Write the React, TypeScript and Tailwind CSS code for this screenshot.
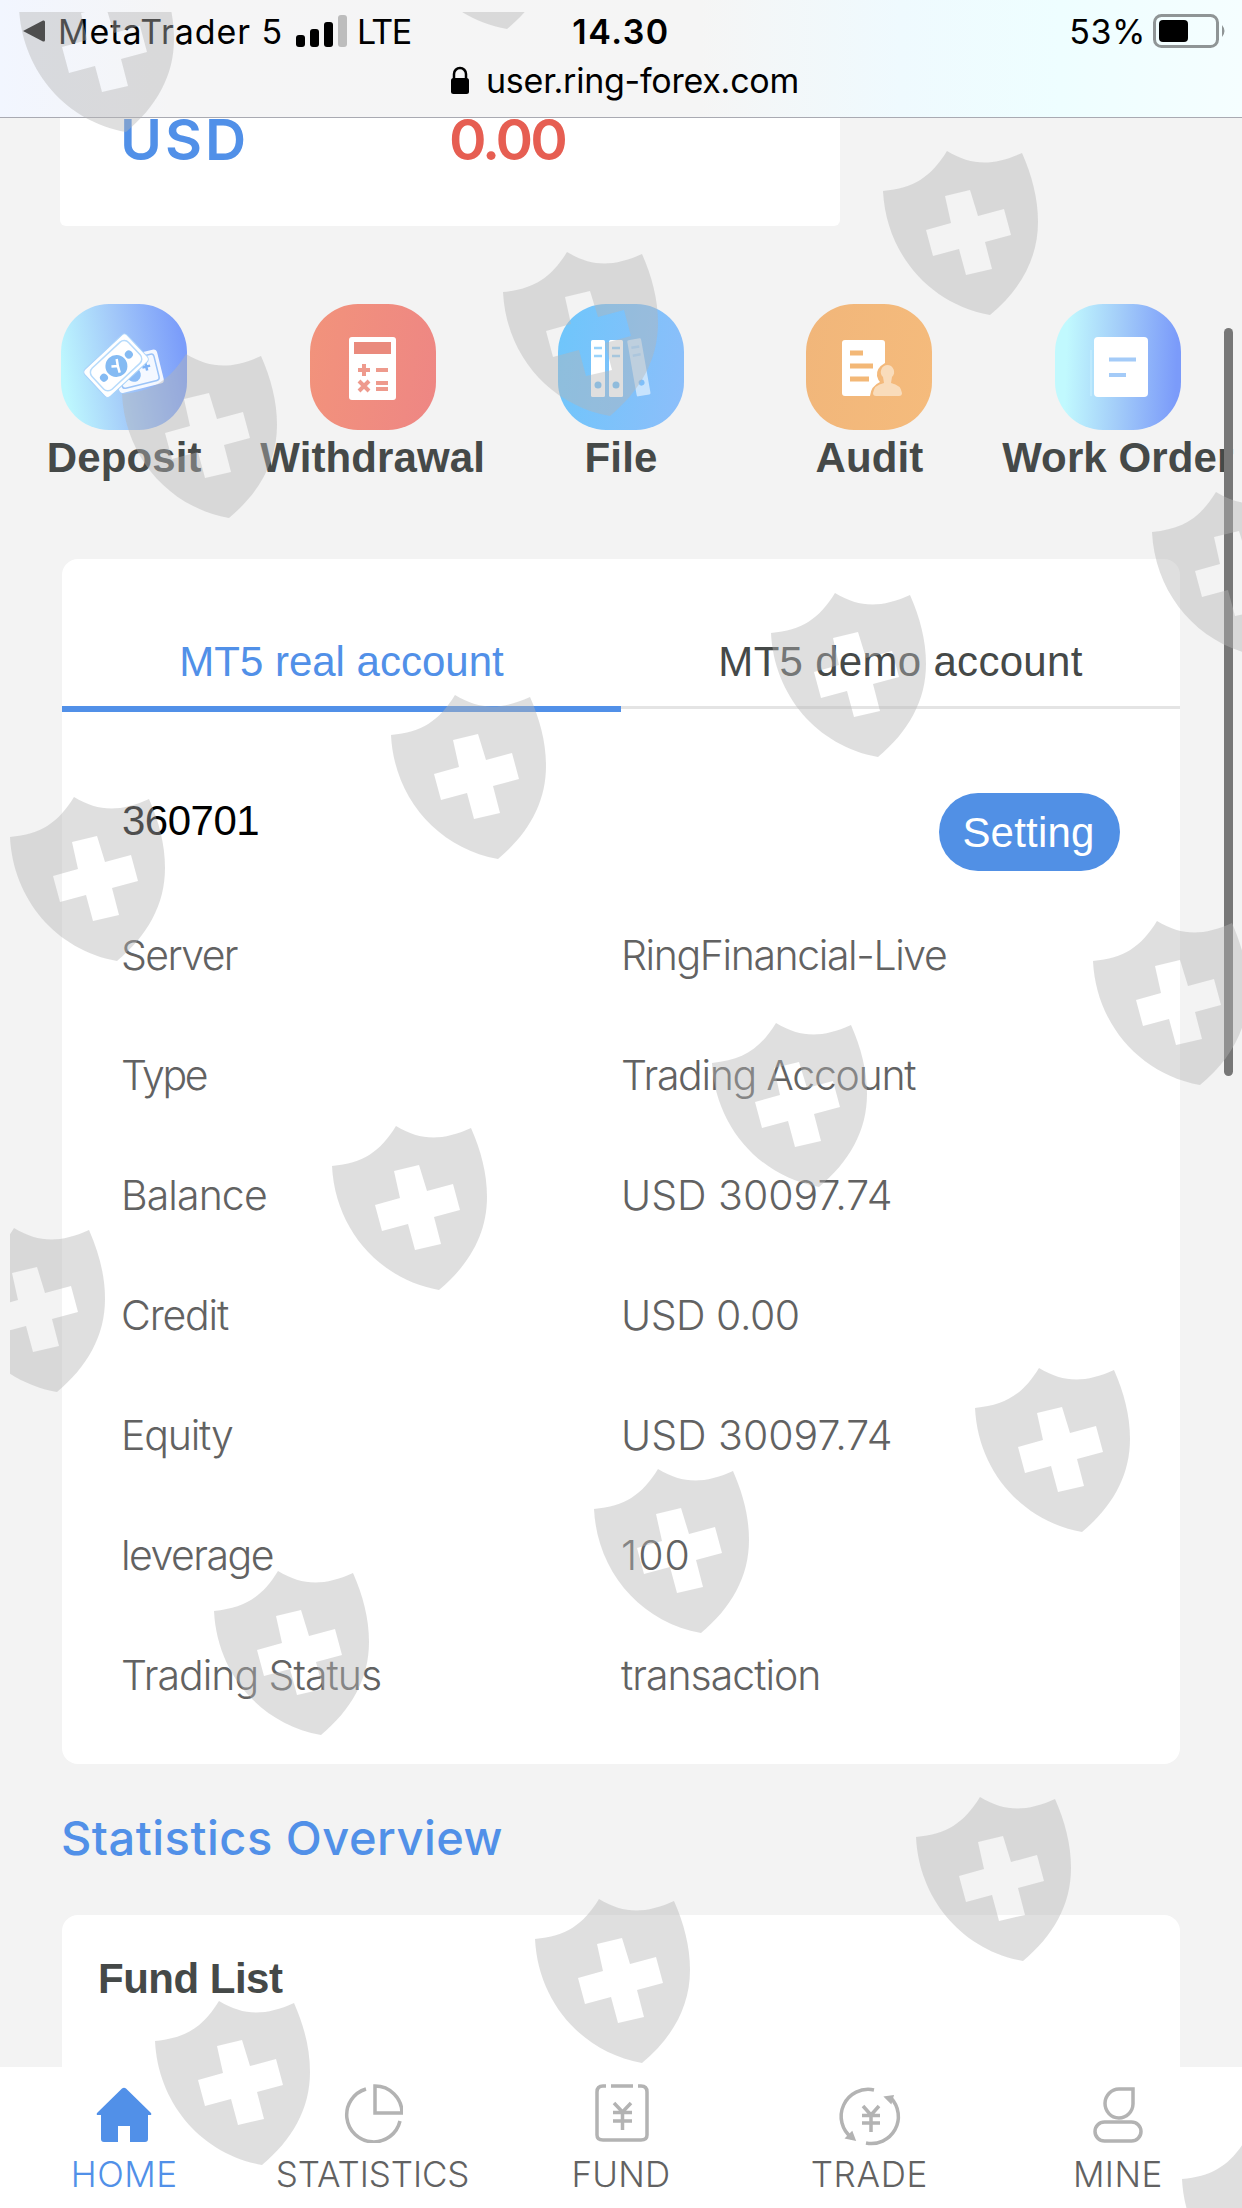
import React from 'react';

const shields = [
  [19, -31], [400, -134], [883, 152], [503, 253], [122, 355], [1152, 493],
  [771, 594], [391, 696], [10, 798], [1093, 922], [712, 1024], [332, 1127],
  [-50, 1229], [975, 1369], [594, 1470], [214, 1572], [916, 1798],
  [535, 1900], [155, 2002], [1182, 2140],
];

const Watermark: React.FC = () => (
  <div className="absolute left-[10px] top-[12px] w-[1232px] h-[2196px] overflow-hidden pointer-events-none">
    <svg width="1232" height="2196" viewBox="10 12 1232 2196">
      {shields.map(([x, y]) => (
        <path
          key={`${x}-${y}`}
          transform={`translate(${x} ${y})`}
          fill="#b4b4b4"
          fillOpacity="0.43"
          fillRule="evenodd"
          d="M0 39C31 36 48 25 64 -1C89 14 110 14 139 1C149 24 155 46 155 70C155 107 137 138 107 163C46 152 3 101 0 39ZM62 44L87 38L95 64L121 57L128 83L102 90L109 117L83 123L76 97L50 104L43 78L68 71Z"
        />
      ))}
    </svg>
  </div>
);

const StatusBar: React.FC = () => (
  <header className="h-[118px] border-b border-[#a9aab2] bg-[linear-gradient(90deg,#f2f6ff_0px,#f5f5f6_170px,#f5f5f5_700px,#effafe_900px,#eefeff_1060px,#f5feff_1242px)] text-black">
    <div className="grid grid-cols-3 items-center h-[62px] pl-[22px] pr-[15px] text-[34px]">
      <div className="flex items-center">
        <svg width="24" height="24" viewBox="0 0 24 24">
          <path d="M1 12L21 1.500Q23 1 23 3V21Q23 23 21 22.500Z" />
        </svg>
        <span className="ml-[12px] tracking-[0.9px] whitespace-nowrap">MetaTrader 5</span>
        <svg className="ml-[13px]" width="51" height="32" viewBox="0 0 51 32">
          <rect x="0" y="20" width="9" height="12" rx="3" />
          <rect x="14" y="14" width="9" height="18" rx="3" />
          <rect x="28" y="7" width="9" height="25" rx="3" />
          <rect x="42" y="0" width="9" height="32" rx="3" fill="#bdbdbd" />
        </svg>
        <span className="ml-[10px] tracking-[-1.600px]">LTE</span>
      </div>
      <span className="text-center font-semibold tracking-[1.5px] pr-[7px]">14.30</span>
      <div className="flex items-center justify-end">
        <span className="tracking-[0.6px]">53%</span>
        <svg className="ml-[7px]" width="74" height="34" viewBox="0 0 74 34">
          <rect x="1.500" y="1.500" width="63" height="31" rx="7" fill="none" stroke="#8f9596" strokeWidth="3" />
          <rect x="6" y="6" width="29" height="22" rx="4" />
          <path d="M69 11Q74 17 69 23Z" fill="#8f9596" />
        </svg>
      </div>
    </div>
    <div className="flex items-center justify-center h-[36px] text-[34px] gap-[16px] pl-[7px]">
      <svg width="20" height="28" viewBox="0 0 20 28">
        <path d="M4 13V8a6 6 0 0 1 12 0V13" fill="none" stroke="black" strokeWidth="2.500" />
        <rect x="1" y="12" width="18" height="16" rx="2.500" />
      </svg>
      <span className="tracking-[-0.25px]">user.ring-forex.com</span>
    </div>
  </header>
);

const MoneyIcon = () => (
  <svg width="126" height="126" viewBox="0 0 126 126">
    <g transform="rotate(-14 84 66)">
      <rect x="54" y="48" width="46" height="35" rx="4" fill="#fff" fillOpacity="0.9" />
      <rect x="58" y="52" width="38" height="27" rx="3" fill="none" stroke="#9cc4f8" strokeWidth="1.500" />
      <path d="M86 59v8M82 63h8" stroke="#7fb3f5" strokeWidth="2.500" />
      <circle cx="72" cy="68" r="7" fill="#8bbcf6" />
    </g>
    <g transform="rotate(-43 54 62)">
      <rect x="26" y="44" width="58" height="37" rx="4" fill="#fff" stroke="#a9d3fa" strokeWidth="1" />
      <rect x="30" y="48" width="50" height="29" rx="6" fill="none" stroke="#b7dbfb" strokeWidth="1.500" />
      <circle cx="55" cy="63" r="11" fill="#85bbf3" />
      <circle cx="38" cy="63" r="4" fill="#85bbf3" />
      <circle cx="72" cy="63" r="4" fill="#85bbf3" />
      <path d="M51 60l5 4l4-6M56 64l-3 6" stroke="#fff" strokeWidth="2.500" fill="none" />
    </g>
  </svg>
);

const CalculatorIcon = () => (
  <svg width="126" height="126" viewBox="0 0 126 126">
    <rect x="39" y="33" width="47" height="63" rx="3" fill="#fff" />
    <rect x="44" y="38" width="37" height="12" fill="#ea8a7d" />
    <g stroke="#ee9a8d" strokeWidth="4">
      <path d="M48 66h12M54 60v12M66 66h12M49 77l10 10M59 77l-10 10M66 79h12M66 85h12" />
    </g>
  </svg>
);

const BindersIcon = () => (
  <svg width="126" height="126" viewBox="0 0 126 126">
    <rect x="33" y="36" width="14" height="57" rx="1.500" fill="#fff" />
    <rect x="51" y="36" width="14" height="57" rx="1.500" fill="#fff" />
    <g transform="rotate(-10 80 64)">
      <rect x="74" y="35" width="14" height="57" rx="1.500" fill="#fff" fillOpacity="0.55" />
      <path d="M77 43h8M77 51h8" stroke="#a5d3fc" strokeWidth="2.500" />
      <circle cx="81" cy="79" r="3" fill="#7fbff9" />
    </g>
    <path d="M36 44h8M36 52h8M54 44h8M54 52h8" stroke="#9bd4fb" strokeWidth="2.500" />
    <circle cx="40" cy="81" r="3.500" fill="#74c2fa" />
    <circle cx="58" cy="81" r="3.500" fill="#74c2fa" />
  </svg>
);

const AuditIcon = () => (
  <svg width="126" height="126" viewBox="0 0 126 126">
    <path
      fill="#fff"
      d="M39 36h37q3 0 3 3v20q-9 5-8 13q1 4 3 6q-9 4-10 14H39q-3 0-3-3V39q0-3 3-3Z"
    />
    <path d="M44 49h13M44 62h23M44 75h19" stroke="#f3b877" strokeWidth="5" />
    <path
      fill="#f9dcbb"
      d="M81 61a7 7 0 0 1 5 12l-1 6q10 2 11 10q0 3-3 3H70q-3 0-3-3q1-8 11-10l-1-6A7 7 0 0 1 81 61Z"
    />
  </svg>
);

const OrderIcon = () => (
  <svg width="126" height="126" viewBox="0 0 126 126">
    <path d="M36 46V92" stroke="#bfeafd" strokeWidth="2" />
    <rect x="39" y="33" width="54" height="60" rx="4" fill="#fff" />
    <path d="M54 55.500H81M54 71H71" stroke="#a4cbf8" strokeWidth="4" />
  </svg>
);

const actions = [
  { label: 'Deposit', bg: 'bg-[linear-gradient(80deg,#bdf7fe_8%,#a3c9f9_48%,#7b9dfa_92%)]', icon: <MoneyIcon /> },
  { label: 'Withdrawal', bg: 'bg-[linear-gradient(100deg,#f2937b,#ee8684)]', icon: <CalculatorIcon /> },
  { label: 'File', bg: 'bg-[linear-gradient(100deg,#6ec6fb,#8dbefa)]', icon: <BindersIcon /> },
  { label: 'Audit', bg: 'bg-[linear-gradient(100deg,#f1b67a,#f5bb7c)]', icon: <AuditIcon /> },
  { label: 'Work Order', bg: 'bg-[linear-gradient(92deg,#c1f9fe_10%,#a3cdf9_50%,#7b9bfa_95%)]', icon: <OrderIcon /> },
];

const rows = [
  { label: 'Server', labelClass: 'tracking-[-1.6px]', value: 'RingFinancial-Live', valueClass: 'tracking-[-1.4px]' },
  { label: 'Type', labelClass: 'tracking-[-2.4px]', value: 'Trading Account', valueClass: 'tracking-[-1.3px]' },
  { label: 'Balance', labelClass: 'tracking-[-0.9px]', value: 'USD 30097.74', valueClass: 'tracking-[0px]' },
  { label: 'Credit', labelClass: 'tracking-[-1.2px]', value: 'USD 0.00', valueClass: 'tracking-[-0.5px]' },
  { label: 'Equity', labelClass: 'tracking-[-1.2px]', value: 'USD 30097.74', valueClass: 'tracking-[0px]' },
  { label: 'leverage', labelClass: 'tracking-[-1.5px]', value: '100', valueClass: 'tracking-[1px]' },
  { label: 'Trading Status', labelClass: 'tracking-[-1px]', value: 'transaction', valueClass: 'tracking-[-1px]' },
];

const HomeIcon = () => (
  <svg width="60" height="60" viewBox="0 0 60 60">
    <path
      fill="#5190e8"
      d="M28 5.500Q30 4 32 5.500L57 30Q58 32 56 32H54V56Q54 59 51 59H36V43H24V59H10Q7 59 7 56V32H4Q2 32 3 30Z"
    />
  </svg>
);

const PieIcon = () => (
  <svg width="60" height="60" viewBox="0 0 60 60" fill="none" stroke="#b3b3b3" strokeWidth="3.500">
    <path d="M23 6A27 27 0 1 0 57 38" />
    <path d="M32 3V30H59A27 27 0 0 0 32 3Z" />
  </svg>
);

const FundIcon = () => (
  <svg width="60" height="60" viewBox="0 0 60 60" fill="none" stroke="#b3b3b3" strokeWidth="3.500">
    <path d="M15 3H12Q6 3 6 9V52Q6 57 12 57H50Q56 57 56 52V9Q56 3 50 3H47M20 3H42" />
    <path d="M23 20L31.500 29L40 20M31.500 29V47M22 29.500H41M22 38H41" />
  </svg>
);

const TradeIcon = () => (
  <svg width="60" height="60" viewBox="0 0 60 60" fill="none" stroke="#b3b3b3" strokeWidth="3.500" className="overflow-visible">
    <path d="M35 7A27 27 0 0 0 13 55M27 60A27 27 0 0 0 52 15" />
    <path d="M46 14L54 13L52 20ZM13 49L7 55L16 57Z" fill="#b3b3b3" strokeWidth="1.500" />
    <path d="M24 23L32 32L40 23M32 32V49M23 32.500H41M23 40H41" />
  </svg>
);

const UserIcon = () => (
  <svg width="60" height="60" viewBox="0 0 60 60" fill="none" stroke="#b3b3b3" strokeWidth="3.500">
    <path d="M31 6H45V21A14 14.500 0 1 1 31 6Z" />
    <rect x="7" y="39" width="46" height="19" rx="9.500" />
  </svg>
);

const tabs = [
  { label: 'HOME', icon: <HomeIcon />, color: 'text-[#5190e8]', tracking: 'tracking-[0.5px]' },
  { label: 'STATISTICS', icon: <PieIcon />, color: 'text-[#626262]', tracking: 'tracking-[-0.1px]' },
  { label: 'FUND', icon: <FundIcon />, color: 'text-[#626262]', tracking: 'tracking-[0.2px]' },
  { label: 'TRADE', icon: <TradeIcon />, color: 'text-[#626262]', tracking: 'tracking-[0.7px]' },
  { label: 'MINE', icon: <UserIcon />, color: 'text-[#626262]', tracking: 'tracking-[0.4px]' },
];

const App: React.FC = () => {
  return (
    <div className="relative flex flex-col w-[1242px] h-[2208px] overflow-hidden bg-[#f3f3f3] font-[Inter,sans-serif]">
      <StatusBar />

      <main className="flex-1 min-h-0">
        {/* Currency balance, partly scrolled under the header */}
        <div className="flex ml-[60px] w-[780px] h-[108px] pl-[60px] rounded-b-[6px] bg-white text-[57px] leading-[44px] font-semibold">
          <span className="w-[329px] tracking-[3px] text-[#5190e8]">USD</span>
          <span className="tracking-[-3px] text-[#e65e52]">0.00</span>
        </div>

        <div className="grid grid-cols-5 mt-[78px]">
          {actions.map((action) => (
            <div key={action.label} className="flex flex-col items-center">
              <div className={`size-[126px] rounded-[48px] ${action.bg}`}>{action.icon}</div>
              <span className="font-['Liberation_Sans',sans-serif] font-bold text-[42px] leading-[56px] tracking-[0.1px] whitespace-nowrap text-[#454948]">
                {action.label}
              </span>
            </div>
          ))}
        </div>

        <section className="mx-[62px] mt-[73px] h-[1205px] rounded-[16px] bg-white">
          <div className="flex h-[153px] font-['Liberation_Sans',sans-serif] text-[42px] text-center">
            <div className="flex-1 pt-[73px] leading-[60px] border-b-[6px] border-[#5190e8] text-[#5190e8]">
              MT5 real account
            </div>
            <div className="flex-1 h-[150px] pt-[73px] leading-[60px] tracking-[0.3px] border-b-[3px] border-[#e4e4e4] text-[#454948]">
              MT5 demo account
            </div>
          </div>

          <div className="flex justify-between h-[183px] pl-[60px] pr-[60px] pt-[81px] font-['Liberation_Sans',sans-serif]">
            <span className="text-[42px] leading-[56px] tracking-[-0.5px] text-black">360701</span>
            <button className="w-[181px] h-[78px] pt-px pr-[2px] rounded-full bg-[#5190e5] text-[42px] tracking-[0.2px] text-white">
              Setting
            </button>
          </div>

          {rows.map((row) => (
            <div key={row.label} className="flex h-[120px] items-center pl-[59px] pt-[2px] text-[41px] font-light text-[#626262]">
              <span className={`w-[500px] ${row.labelClass}`}>{row.label}</span>
              <span className={row.valueClass}>{row.value}</span>
            </div>
          ))}
        </section>

        <h2 className="ml-[61px] mt-[44px] text-[47px] leading-[60px] tracking-[0.5px] font-medium text-[#5190e8]">
          Statistics Overview
        </h2>

        <section className="mx-[62px] mt-[47px] h-[152px] rounded-t-[16px] bg-white pl-[36px] pt-[34px]">
          <h3 className="font-['Liberation_Sans',sans-serif] font-bold text-[42px] leading-[60px] tracking-[-0.5px] text-[#454948]">
            Fund List
          </h3>
        </section>
      </main>

      <nav className="grid grid-cols-5 h-[141px] pt-[16px] bg-white">
        {tabs.map((tab) => (
          <div key={tab.label} className={`flex flex-col items-center ${tab.color}`}>
            {tab.icon}
            <span className={`mt-[13px] text-[35px] leading-[36px] font-light ${tab.tracking}`}>{tab.label}</span>
          </div>
        ))}
      </nav>

      <div className="absolute left-[1224px] top-[328px] w-[9px] h-[748px] rounded-full bg-[#777]" />
      <Watermark />
    </div>
  );
};

export default App;
